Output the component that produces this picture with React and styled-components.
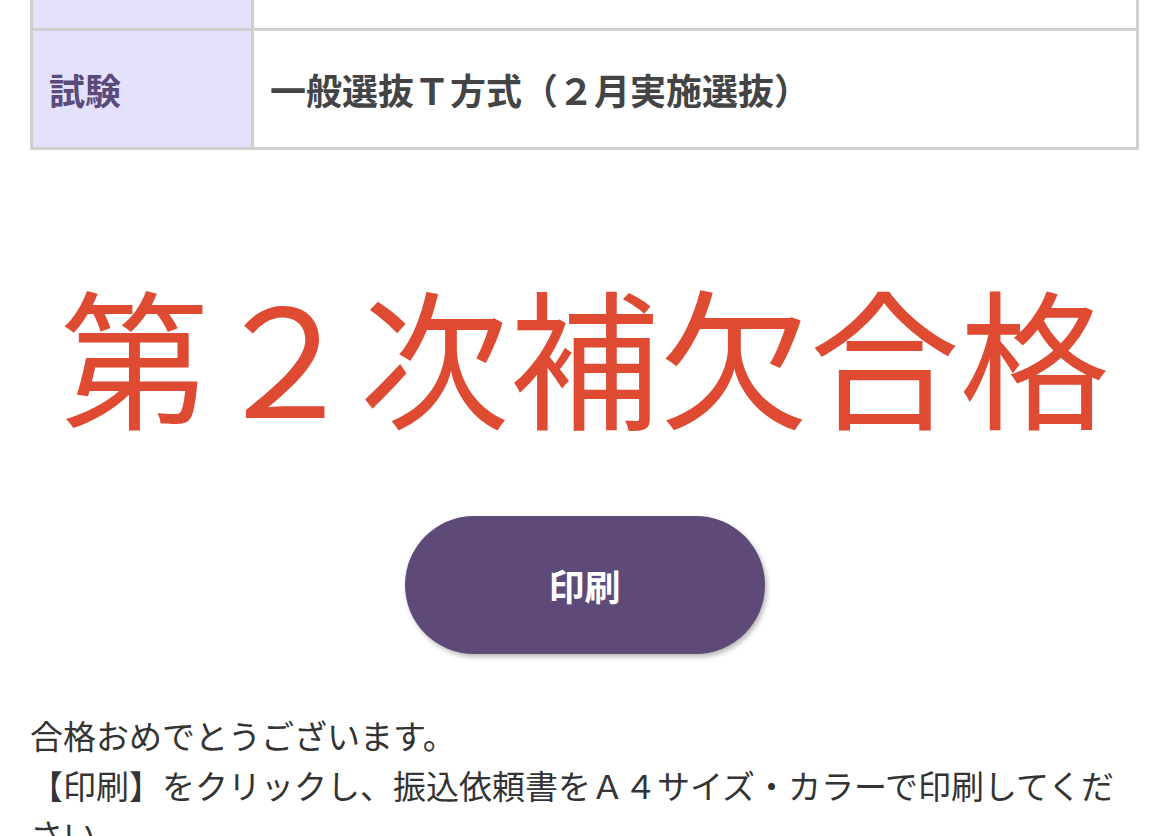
import React from 'react';
import styled, { createGlobalStyle } from 'styled-components';

const GlobalStyle = createGlobalStyle`
    html, body {
        margin: 0;
        padding: 0;
        background: #fff;
    }
    body {
        font-family: "Noto Sans CJK JP", "Noto Sans", sans-serif;
        color: #333;
    }
`;

const Page = styled.div`
    margin-top: -91px;   /* page is scrolled: first row sits above the viewport */
    padding: 0 31px 0 30px;
    height: 927px;
    overflow: hidden;
`;

const InfoTable = styled.div`
    display: grid;
    grid-template-columns: 221px 1fr;
    border-top: 3px solid #cfcfcf;
    border-left: 3px solid #cfcfcf;
`;

const Cell = styled.div`
    box-sizing: border-box;
    height: 119px;
    display: flex;
    align-items: center;
    padding: 0 16px;
    border-right: 3px solid #cfcfcf;
    border-bottom: 3px solid #cfcfcf;
    font-size: 36px;
    font-weight: 700;
    background: ${({ $head }) => ($head ? '#e4e2fb' : '#fff')};
    color: ${({ $head }) => ($head ? '#5b4a7c' : '#444')};
`;

const Result = styled.h1`
    margin: 113px 0 0;
    font-size: 150px;
    line-height: 180px;
    font-weight: 400;
    text-align: center;
    color: #df4a32;
    white-space: nowrap;
`;

const ButtonRow = styled.div`
    display: flex;
    justify-content: center;
    margin-top: 73px;
`;

const PrintButton = styled.button`
    width: 360px;
    height: 138px;
    border: none;
    border-radius: 69px;
    background: #5d4a78;
    color: #fff;
    font-family: inherit;
    font-size: 36px;
    font-weight: 700;
    box-shadow: 2px 3px 5px rgba(0, 0, 0, 0.28);
    cursor: pointer;
`;

const Message = styled.p`
    margin: 57px 0 0;
    font-size: 33px;
    line-height: 49.5px;
    color: #333;
`;

const rows = [
    { label: '受験番号', value: '' },
    { label: '試験', value: '一般選抜Ｔ方式（２月実施選抜）' },
];

const App = () => {
    return (
        <React.Fragment>
            <GlobalStyle />
            <Page>
                <InfoTable>
                    {rows.map((row, index) => (
                        <React.Fragment key={index}>
                            <Cell $head>{row.label}</Cell>
                            <Cell>{row.value}</Cell>
                        </React.Fragment>
                    ))}
                </InfoTable>

                <Result>第２次補欠合格</Result>

                <ButtonRow>
                    <PrintButton>印刷</PrintButton>
                </ButtonRow>

                <Message>
                    合格おめでとうございます。
                    <br />
                    【印刷】をクリックし、振込依頼書をＡ４サイズ・カラーで印刷してください。
                </Message>
            </Page>
        </React.Fragment>
    );
};

export default App;
